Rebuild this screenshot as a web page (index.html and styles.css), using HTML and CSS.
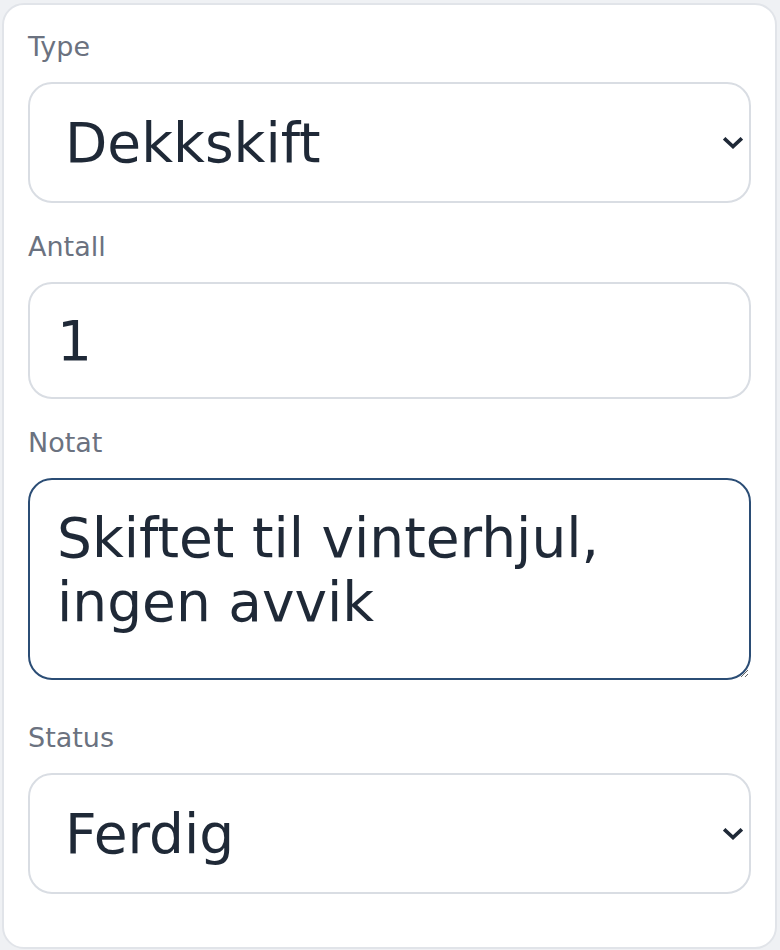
FILE: index.html
```html
<!DOCTYPE html>
<html lang="no">
<head>
  <meta charset="UTF-8" />
  <meta name="viewport" content="width=device-width, initial-scale=1.0">
  <title>Registrer arbeid</title>
  <link rel="stylesheet" href="styles.css">
</head>
<body>

<!-- Work order form card -->
<form class="card">
  <div class="field">
    <label for="type">Type</label>
    <div class="select-wrap">
      <select id="type">
        <option>Dekkskift</option>
        <option>Service</option>
        <option>EU-kontroll</option>
      </select>
      <svg class="chevron" viewBox="0 0 20 12" width="20" height="12"><path d="M2.5 2.5 L10 9.5 L17.5 2.5" fill="none" stroke="#1f2937" stroke-width="3.6" stroke-linecap="square"/></svg>
    </div>
  </div>

  <div class="field">
    <label for="antall">Antall</label>
    <input type="number" id="antall" value="1" />
  </div>

  <div class="field field-note">
    <label for="notat">Notat</label>
    <textarea id="notat">Skiftet til vinterhjul, ingen avvik</textarea>
  </div>

  <div class="field field-last">
    <label for="status">Status</label>
    <div class="select-wrap">
      <select id="status">
        <option>Ferdig</option>
        <option>Pågår</option>
        <option>Venter</option>
      </select>
      <svg class="chevron" viewBox="0 0 20 12" width="20" height="12"><path d="M2.5 2.5 L10 9.5 L17.5 2.5" fill="none" stroke="#1f2937" stroke-width="3.6" stroke-linecap="square"/></svg>
    </div>
  </div>
</form>

</body>
</html>
```

FILE: styles.css
```css
* { margin: 0; padding: 0; box-sizing: border-box; }
body {
  font-family: "DejaVu Sans", "Noto Sans", sans-serif;
  background: #eff1f4;
  color: #1f2937;
  padding: 3px 3px 3px 2px;
}
.card {
  background: #fff;
  border: 2px solid #e1e4e9;
  border-radius: 22px;
  padding: 26px 24px 53px 24px;
}
.field { display: flex; flex-direction: column; margin-bottom: 28px; }
.field-note { margin-bottom: 42px; }
.field-last { margin-bottom: 0; }
label {
  font-size: 27px;
  color: #6b7280;
  margin-bottom: 20px;
}
input, select, textarea {
  font-family: inherit;
  font-size: 55px;
  color: #1f2937;
  background: #fff;
  border: 2px solid #d9dde3;
  border-radius: 24px;
  width: 100%;
  outline: none;
}
input {
  height: 117px;
  padding: 0 27px;
  -moz-appearance: textfield;
}
input::-webkit-outer-spin-button,
input::-webkit-inner-spin-button { -webkit-appearance: none; margin: 0; }
textarea {
  height: 202px;
  padding: 26px 27px 22px;
  border-color: #2b4d75;
  line-height: 1.164;
  resize: vertical;
}
.select-wrap { position: relative; }
select {
  -webkit-appearance: none;
  appearance: none;
  height: 121px;
  padding: 0 60px 0 35px;
}
.chevron {
  position: absolute;
  right: 8px; top: 55px;
  pointer-events: none;
}
```
